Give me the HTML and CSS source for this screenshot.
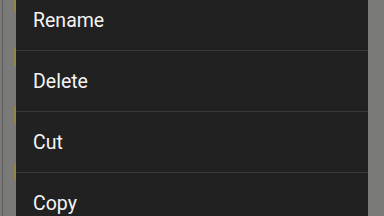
FILE: index.html
```html
<!DOCTYPE html>
<html lang="en">
<head>
  <meta charset="UTF-8" />
  <meta name="viewport" content="width=device-width, initial-scale=1.0"/>
  <title>File options</title>
  <link rel="stylesheet" href="styles.css">
</head>
<body>
  <div class="screen">
    <div class="backdrop">
      <div class="edge-line"></div>
      <div class="edge-marks">
        <span class="mark mark-1"></span>
        <span class="mark mark-2"></span>
        <span class="mark mark-3"></span>
        <span class="mark mark-4"></span>
      </div>
    </div>
    <ul class="menu-list">
      <li class="menu-item">Rename</li>
      <li class="menu-item">Delete</li>
      <li class="menu-item">Cut</li>
      <li class="menu-item">Copy</li>
    </ul>
    <div class="backdrop-right"></div>
  </div>
</body>
</html>
```

FILE: styles.css
```css
* {
  margin: 0;
  padding: 0;
  box-sizing: border-box;
}

body {
  width: 384px;
  height: 216px;
  overflow: hidden;
  background-color: #7a7a78;
  font-family: Roboto, 'Noto Sans', sans-serif;
}

.screen {
  display: flex;
  height: 216px;
  overflow: hidden;
}

.backdrop {
  width: 16px;
  display: flex;
  background-color: #7a7a78;
}

.edge-line {
  width: 1px;
  margin-left: 2px;
  background-color: #5e5e5e;
}

.edge-marks {
  display: flex;
  flex-direction: column;
  margin-left: 10px;
}

.mark {
  display: block;
  width: 3px;
  background: linear-gradient(to right, #7f7a55, #a08a2c);
}

.mark-1 {
  height: 12px;
}

.mark-2 {
  height: 18px;
  margin-top: 36px;
}

.mark-3 {
  height: 18px;
  margin-top: 40px;
}

.mark-4 {
  height: 16px;
  margin-top: 40px;
}

.menu-list {
  list-style: none;
  width: 352px;
  height: 260px;
  background-color: #212121;
  margin-top: -10px;
}

.menu-item {
  height: 61px;
  display: flex;
  align-items: center;
  padding-left: 17px;
  color: #f4f4f4;
  font-size: 19.5px;
  border-bottom: 1px solid #3a3a3a;
}

.backdrop-right {
  flex: 1;
  background-color: #7a7a78;
}
```
